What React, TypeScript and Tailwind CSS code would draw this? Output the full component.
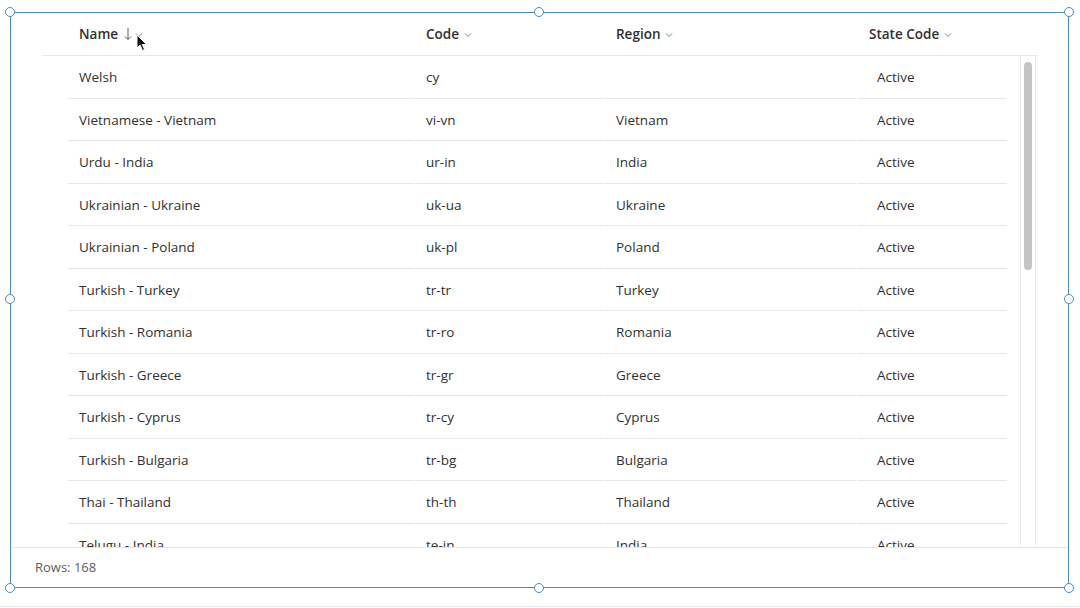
import React from 'react';

type Row = { name: string; code: string; region: string; state: string };

const rows: Row[] = [
  { name: 'Welsh', code: 'cy', region: '', state: 'Active' },
  { name: 'Vietnamese - Vietnam', code: 'vi-vn', region: 'Vietnam', state: 'Active' },
  { name: 'Urdu - India', code: 'ur-in', region: 'India', state: 'Active' },
  { name: 'Ukrainian - Ukraine', code: 'uk-ua', region: 'Ukraine', state: 'Active' },
  { name: 'Ukrainian - Poland', code: 'uk-pl', region: 'Poland', state: 'Active' },
  { name: 'Turkish - Turkey', code: 'tr-tr', region: 'Turkey', state: 'Active' },
  { name: 'Turkish - Romania', code: 'tr-ro', region: 'Romania', state: 'Active' },
  { name: 'Turkish - Greece', code: 'tr-gr', region: 'Greece', state: 'Active' },
  { name: 'Turkish - Cyprus', code: 'tr-cy', region: 'Cyprus', state: 'Active' },
  { name: 'Turkish - Bulgaria', code: 'tr-bg', region: 'Bulgaria', state: 'Active' },
  { name: 'Thai - Thailand', code: 'th-th', region: 'Thailand', state: 'Active' },
  { name: 'Telugu - India', code: 'te-in', region: 'India', state: 'Active' },
];

const Chevron = ({ className = 'ml-[5px]' }: { className?: string }) => (
  <svg width="8" height="6" viewBox="0 0 8 6" className={`${className} mt-px`}>
    <path d="M1 1.5 L4 4.5 L7 1.5" fill="none" stroke="#8a8886" strokeWidth="1" />
  </svg>
);

const SortDown = () => (
  <svg width="8" height="14" viewBox="0 0 8 14" className="ml-[6px]">
    <path d="M4 1 V12.5 M1 9.5 L4 12.5 L7 9.5" fill="none" stroke="#605e5c" strokeWidth="1" />
  </svg>
);

const Handle = ({ className }: { className: string }) => (
  <div
    className={`absolute w-[10px] h-[10px] rounded-full bg-white border border-[#4a8cc4] ${className}`}
  />
);

const Cursor = () => (
  <svg
    width="13"
    height="18"
    viewBox="0 0 13 18"
    className="absolute left-[136px] top-[34px]"
  >
    <path
      d="M1 1 L1 14 L4.2 11.2 L6.5 16.5 L8.6 15.6 L6.3 10.5 L10.5 10.5 Z"
      fill="#111"
      stroke="#fff"
      strokeWidth="1"
      strokeLinejoin="round"
    />
  </svg>
);

const App: React.FC = () => {
  return (
    <div
      className="relative w-[1080px] h-[608px] bg-white overflow-hidden text-[#323130]"
      style={{ fontFamily: '"Open Sans", "Noto Sans", sans-serif' }}
    >
      <div className="pt-[12px] pl-[10px]">
        <div className="relative w-[1059px] h-[576px] border border-[#4a8cc4] flex flex-col">
          {/* grid */}
          <div className="flex-1 flex flex-col pl-[32px] pr-[31px] min-h-0">
            {/* header */}
            <div className="flex h-[43px] border-b border-[#e8e8e8] text-[13.5px] font-semibold">
              <div className="w-[25px]" />
              <div className="w-[347px] flex items-center pl-[11px]">
                <span>Name</span>
                <SortDown />
                <Chevron className="ml-[3px]" />
              </div>
              <div className="w-[190px] flex items-center pl-[11px]">
                <span>Code</span>
                <Chevron />
              </div>
              <div className="w-[252px] flex items-center pl-[11px]">
                <span>Region</span>
                <Chevron />
              </div>
              <div className="w-[150px] flex items-center pl-[12px]">
                <span>State Code</span>
                <Chevron />
              </div>
            </div>
            {/* body */}
            <div className="flex-1 flex min-h-0 overflow-hidden">
              <div className="w-[964px] pl-[25px] overflow-hidden text-[13.5px]">
                {rows.map((r) => (
                  <div key={r.name} className="flex h-[42.5px]">
                    <div className="w-[346px] mr-px flex items-center pl-[11px] pt-px border-b border-[#e6e6e6]">
                      {r.name}
                    </div>
                    <div className="w-[189px] mr-px flex items-center pl-[11px] pt-px border-b border-[#e6e6e6]">
                      {r.code}
                    </div>
                    <div className="w-[251px] mr-px flex items-center pl-[11px] pt-px border-b border-[#e6e6e6]">
                      {r.region}
                    </div>
                    <div className="w-[150px] flex items-center pl-[20px] pt-px border-b border-[#e6e6e6]">
                      {r.state}
                    </div>
                  </div>
                ))}
              </div>
              <div className="ml-[13px] w-[16px] border-x border-[#ececec] pt-[6px] pl-[3px]">
                <div className="w-[8px] h-[208px] rounded-full bg-[#c4c4c4]" />
              </div>
            </div>
          </div>
          {/* footer */}
          <div className="h-[40px] border-t border-[#e8e8e8] flex items-center pl-[24px] text-[13px] text-[#605e5c]">
            Rows: 168
          </div>

          <Handle className="-left-[6px] -top-[6px]" />
          <Handle className="left-[523px] -top-[6px]" />
          <Handle className="-right-[6px] -top-[6px]" />
          <Handle className="-left-[6px] top-[281px]" />
          <Handle className="-right-[6px] top-[281px]" />
          <Handle className="-left-[6px] -bottom-[6px]" />
          <Handle className="left-[523px] -bottom-[6px]" />
          <Handle className="-right-[6px] -bottom-[6px]" />
        </div>
      </div>
      <div className="mt-[18px] h-px bg-[#e6e6e6]" />
      <Cursor />
    </div>
  );
};

export default App;
